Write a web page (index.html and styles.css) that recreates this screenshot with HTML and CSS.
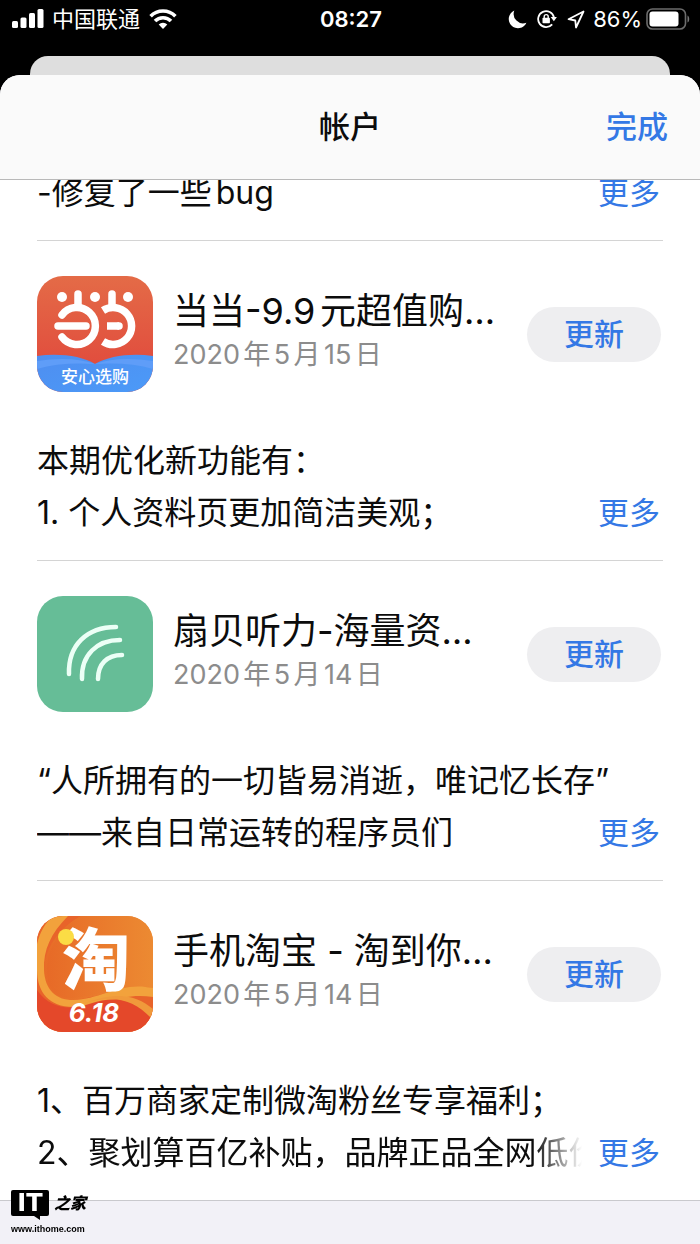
FILE: index.html
```html
<!DOCTYPE html>
<html lang="zh-CN">
<head>
    <meta charset="UTF-8">
    <meta name="viewport" content="width=device-width, initial-scale=1.0">
    <title>帐户</title>
    <link rel="stylesheet" href="styles.css">
</head>
<body>
    <div class="status-bar">
        <div class="status-left">
            <svg width="32" height="20" viewBox="0 0 32 20" fill="#fff">
                <rect x="0" y="12" width="6" height="7" rx="1.5"/>
                <rect x="8.5" y="8.5" width="6" height="10.5" rx="1.5"/>
                <rect x="17" y="4" width="6" height="15" rx="1.5"/>
                <rect x="25.5" y="0" width="6" height="19" rx="1.5"/>
            </svg>
            <span class="carrier">中国联通</span>
            <svg width="28" height="20" viewBox="0 0 28 20" fill="none" stroke="#fff" stroke-width="3.6">
                <path d="M1.6 7.2a17.500 17.500 0 0 1 24.800 0"/>
                <path d="M6 12a11.300 11.300 0 0 1 16 0"/>
                <path d="M14 20l-4.300-4.400a6.200 6.200 0 0 1 8.600 0z" fill="#fff" stroke="none"/>
            </svg>
        </div>
        <time class="clock">08:27</time>
        <div class="status-right">
            <svg width="19" height="19" viewBox="0 0 19 19" fill="#fff">
                <path d="M6.300.6A9.200 9.200 0 1 0 18.400 12.700 9.400 9.400 0 0 1 6.300.6z"/>
            </svg>
            <svg class="lock" width="20" height="20" viewBox="0 0 20 20">
                <path d="M15.200 15.400A8 8 0 1 1 17 8.500" fill="none" stroke="#fff" stroke-width="1.8"/>
                <path d="M13.700 8h6.200l-3 4.300z" fill="#fff"/>
                <rect x="5.5" y="8.8" width="7.4" height="5.4" rx=".8" fill="#fff"/>
                <path d="M7.200 9V7.600a2 2 0 0 1 4 0V9" fill="none" stroke="#fff" stroke-width="1.4"/>
            </svg>
            <svg class="arrow" width="18" height="19" viewBox="0 0 18 19" fill="none" stroke="#fff" stroke-width="1.8" stroke-linejoin="round">
                <path d="M16.500 1.500L1.500 9.200l6.800 1.300.7 7z"/>
            </svg>
            <span class="percent">86%</span>
            <svg width="44" height="22" viewBox="0 0 44 22">
                <rect x="1" y="1" width="38.5" height="20" rx="5.5" fill="none" stroke="#6c6c6c" stroke-width="1.6"/>
                <rect x="3.5" y="3.5" width="29" height="15" rx="3" fill="#fff"/>
                <path d="M41.500 7.500c2.300 1 2.300 6 0 7z" fill="#777"/>
            </svg>
        </div>
    </div>
    <div class="back-card"></div>

    <main class="sheet">
        <header class="nav">
            <h1>帐户</h1>
            <button class="done" type="button">完成</button>
        </header>

        <section class="app app-scrolled">
            <div class="notes">
                <div class="last-line">
                    <p>-修复了一些bug</p>
                    <a class="more" href="#">更多</a>
                </div>
            </div>
        </section>

        <section class="app">
            <div class="app-head">
                <svg class="app-icon" viewBox="0 0 116 116">
                    <defs>
                        <linearGradient id="red" x1="0" y1="0" x2="0" y2="1">
                            <stop offset="0" stop-color="#e46b47"/>
                            <stop offset="1" stop-color="#e0443b"/>
                        </linearGradient>
                        <linearGradient id="blue" x1="0" y1="0" x2="1" y2="1">
                            <stop offset="0" stop-color="#4f8ef0"/>
                            <stop offset="1" stop-color="#4b9af8"/>
                        </linearGradient>
                    </defs>
                    <rect width="116" height="116" fill="url(#red)"/>
                    <path d="M0 80C22 77 45 80 58 88C72 80 94 77 116 80V116H0z" fill="url(#blue)"/>
                    <path d="M0 85Q35 80 58 88Q24 86 0 93z" fill="#5f9df8"/>
                    <path d="M116 85Q81 80 58 88Q92 86 116 93z" fill="#5f9df8"/>
                    <g fill="none" stroke="#fff" stroke-width="7.5" stroke-linecap="round">
                        <path d="M25 39A18.500 18.500 0 1 1 25 61"/>
                        <path d="M21 50H49"/>
                        <path d="M66 34.500A18.500 18.500 0 1 1 66 65.500" stroke-linecap="butt"/>
                        <path d="M70 50H82" stroke-linecap="butt"/>
                        <path d="M82 50H82"/>
                        <path d="M41 18V29M75 18V29"/>
                    </g>
                    <g fill="#fff">
                        <circle cx="25" cy="21" r="5"/>
                        <circle cx="58" cy="21" r="5"/>
                        <circle cx="91" cy="21" r="5"/>
                    </g>
                    <text class="icon-label" x="58" y="107" text-anchor="middle">安心选购</text>
                </svg>
                <div class="app-info">
                    <h2>当当-9.9元超值购…</h2>
                    <p class="date">2020年5月15日</p>
                </div>
                <button class="update" type="button">更新</button>
            </div>
            <div class="notes">
                <p>本期优化新功能有：</p>
                <div class="last-line">
                    <p>1. 个人资料页更加简洁美观；</p>
                    <a class="more" href="#">更多</a>
                </div>
            </div>
        </section>

        <section class="app">
            <div class="app-head">
                <svg class="app-icon" viewBox="0 0 116 116">
                    <rect width="116" height="116" fill="#66bd97"/>
                    <g fill="none" stroke="#ecfff6" stroke-width="4.5" stroke-linecap="round">
                        <path d="M32 78C31 49 50 31 79 31"/>
                        <path d="M45 83C44 59 60 44 83 44"/>
                        <path d="M61 83C61 68 70 59 85 59"/>
                    </g>
                </svg>
                <div class="app-info">
                    <h2>扇贝听力-海量资…</h2>
                    <p class="date">2020年5月14日</p>
                </div>
                <button class="update" type="button">更新</button>
            </div>
            <div class="notes">
                <p>“人所拥有的一切皆易消逝，唯记忆长存”</p>
                <div class="last-line">
                    <p>——来自日常运转的程序员们</p>
                    <a class="more" href="#">更多</a>
                </div>
            </div>
        </section>

        <section class="app app-last">
            <div class="app-head">
                <svg class="app-icon" viewBox="0 0 116 116">
                    <defs>
                        <linearGradient id="orange" x1="0" y1="0" x2="1" y2="0">
                            <stop offset="0" stop-color="#e76a27"/>
                            <stop offset="1" stop-color="#ec8a32"/>
                        </linearGradient>
                    </defs>
                    <rect width="116" height="116" fill="url(#orange)"/>
                    <path d="M0 0H44C22 12 7 32 7 55C7 76 20 85 36 84C64 82 87 66 116 72V116H0z" fill="#e8642a"/>
                    <path d="M44 0C22 14 10 32 10 54C10 74 20 83 36 82C58 81 80 69 116 72V0z" fill="url(#orange)"/>
                    <path d="M16 0H31C14 17 6 34 7 54C8 74 19 84 36 84C65 83 84 65 116 72V81C84 76 67 91 36 91C12 91 0 76 0 54V28C3 16 8 7 16 0z" fill="#f2a23c"/>
                    <path d="M0 74C14 94 34 94 52 88C79 79 95 84 116 98V116H0z" fill="#e4482a"/>
                    <path d="M48 87C78 78 98 84 116 104V93C98 78 78 76 48 87z" fill="#f09a3b"/>
                    <text class="tao" x="59" y="69" text-anchor="middle">淘</text>
                    <circle cx="29" cy="21" r="8" fill="#fbdc45"/>
                    <text class="sale" x="57" y="106" text-anchor="middle">6.18</text>
                </svg>
                <div class="app-info">
                    <h2>手机淘宝 - 淘到你…</h2>
                    <p class="date">2020年5月14日</p>
                </div>
                <button class="update" type="button">更新</button>
            </div>
            <div class="notes">
                <p>1、百万商家定制微淘粉丝专享福利；</p>
                <div class="last-line">
                    <p class="fade">2、聚划算百亿补贴，品牌正品全网低价</p>
                    <a class="more" href="#">更多</a>
                </div>
            </div>
        </section>
    </main>

    <div class="watermark">
        <div class="logo">
            <span class="logo-it">IT</span>
            <span class="logo-home">之家</span>
        </div>
        <div class="site">www.ithome.com</div>
    </div>
</body>
</html>
```
FILE: styles.css
```css
* {
    box-sizing: border-box;
}
body {
    margin: 0;
    min-height: 100vh;
    display: flex;
    flex-direction: column;
    background-color: #000;
    color: #0c0c0c;
    font-family: Inter, "Noto Sans CJK SC", sans-serif;
    text-autospace: normal;
}
h1, h2, p {
    margin: 0;
    font-weight: 400;
}
svg {
    flex: none;
}
button {
    border: none;
    font-family: inherit;
    color: #3478e5;
    cursor: pointer;
}

/* status bar */
.status-bar {
    display: grid;
    grid-template-columns: 1fr auto 1fr;
    align-items: center;
    height: 56px;
    padding: 0 10px 18px 12px;
    color: #fff;
    font-size: 22px;
    line-height: 28px;
}
.status-left, .status-right {
    display: flex;
    align-items: center;
}
.carrier {
    margin: 0 9px 0 8px;
}
.clock {
    font-weight: 600;
}
.status-right {
    justify-content: flex-end;
}
.lock {
    margin-left: 10px;
}
.arrow {
    margin: 0 8px 0 10px;
}
.percent {
    margin-right: 4px;
}
.back-card {
    height: 19px;
    margin: 0 30px;
    background-color: #dedede;
    border-radius: 18px 18px 0 0;
}

/* sheet */
.sheet {
    flex: 1;
    background-color: #f2f1f7;
    border-radius: 20px 20px 0 0;
}
.nav {
    position: relative;
    z-index: 1;
    display: grid;
    grid-template-columns: 1fr auto 1fr;
    align-items: center;
    height: 105px;
    padding: 0 32px;
    background-color: #fafafa;
    border-bottom: 1px solid #b9b9b9;
    border-radius: 20px 20px 0 0;
}
.nav h1 {
    grid-column: 2;
    font-size: 31px;
    font-weight: 500;
    line-height: 44px;
}
.done {
    justify-self: end;
    padding: 0;
    background: none;
    font-size: 31px;
    font-weight: 500;
    line-height: 44px;
}

/* app list */
.app {
    padding: 0 37px;
    background-color: #fff;
}
.app-scrolled {
    margin-top: -13px;
}
.app-last {
    border-bottom: 1px solid #c9c9cd;
}
.app-head {
    display: flex;
    align-items: center;
    gap: 20px;
    padding: 35px 2px 43px 0;
}
.app-icon {
    width: 116px;
    height: 116px;
    border-radius: 26px;
}
.app-info {
    flex: 1;
    min-width: 0;
}
.app-info h2 {
    font-size: 36px;
    line-height: 48px;
    white-space: nowrap;
}
.date {
    padding-bottom: 6px;
    color: #8c8c8c;
    font-size: 27px;
    line-height: 40px;
}
.update {
    width: 134px;
    height: 55px;
    padding: 0 0 4px;
    background-color: #eeeef0;
    border-radius: 28px;
    font-size: 30px;
    font-weight: 500;
}
.notes {
    padding-bottom: 21px;
    border-bottom: 1px solid #d4d4d4;
    font-size: 32px;
    line-height: 52px;
    white-space: nowrap;
}
.app-last .notes {
    border-bottom: none;
}
.last-line {
    display: flex;
    gap: 16px;
    padding-right: 3px;
}
.last-line p {
    flex: 1;
    min-width: 0;
    overflow: hidden;
}
.fade {
    mask-image: linear-gradient(to left, transparent, #000 48px);
}
.more {
    color: #3478e5;
    font-size: 31px;
    text-decoration: none;
}

/* text inside the app icons */
.icon-label {
    fill: #fff;
    font-size: 17px;
    font-weight: 500;
}
.tao {
    fill: #fff;
    font-size: 68px;
    font-weight: 900;
}
.sale {
    fill: #fff;
    font-size: 26px;
    font-style: italic;
    font-weight: 700;
}

/* watermark */
.watermark {
    position: fixed;
    left: 11px;
    bottom: 8px;
    color: #000;
}
.logo {
    display: flex;
    align-items: center;
    gap: 5px;
}
.logo-it {
    position: relative;
    width: 38px;
    height: 26px;
    background-color: #000;
    border-radius: 2px;
    color: #fff;
    font-family: "DejaVu Sans", sans-serif;
    font-size: 24px;
    font-weight: 700;
    line-height: 26px;
    text-align: center;
}
.logo-it::after {
    content: '';
    position: absolute;
    right: 9px;
    bottom: -4px;
    border-top: 4px solid #000;
    border-left: 6px solid transparent;
}
.logo-home {
    font-size: 16px;
    font-style: italic;
    font-weight: 900;
    line-height: 26px;
}
.site {
    margin-top: 6px;
    font-family: "Liberation Sans", sans-serif;
    font-size: 9px;
    font-weight: 700;
    line-height: 14px;
}
```
